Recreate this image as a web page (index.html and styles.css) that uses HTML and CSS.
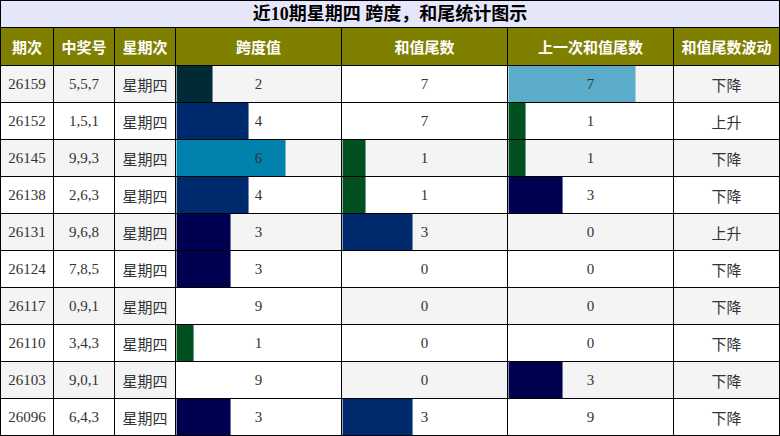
FILE: index.html
```html
<!DOCTYPE html>
<html lang="zh">
<head>
<meta charset="utf-8">
<title>近10期星期四 跨度，和尾统计图示</title>
<link rel="stylesheet" href="styles.css">
</head>
<body>
<div class="grid">
  <div class="title">近10期星期四 跨度，和尾统计图示</div>

  <div class="hd">期次</div><div class="hd">中奖号</div><div class="hd">星期次</div><div class="hd">跨度值</div><div class="hd">和值尾数</div><div class="hd">上一次和值尾数</div><div class="hd">和值尾数波动</div>

  <div class="c odd">26159</div><div class="c odd">5,5,7</div><div class="c odd cjk">星期四</div>
  <div class="c odd bc"><span class="bar b2" style="width:22.22%"></span><span class="v">2</span></div>
  <div class="c odd bc"><span class="bar bw" style="width:100%"></span><span class="v">7</span></div>
  <div class="c odd bc"><span class="bar b7" style="width:77.78%"></span><span class="v">7</span></div>
  <div class="c odd cjk">下降</div>

  <div class="c">26152</div><div class="c">1,5,1</div><div class="c cjk">星期四</div>
  <div class="c bc"><span class="bar b4" style="width:44.44%"></span><span class="v">4</span></div>
  <div class="c bc"><span class="bar bw" style="width:100%"></span><span class="v">7</span></div>
  <div class="c bc"><span class="bar b1" style="width:11.11%"></span><span class="v">1</span></div>
  <div class="c cjk">上升</div>

  <div class="c odd">26145</div><div class="c odd">9,9,3</div><div class="c odd cjk">星期四</div>
  <div class="c odd bc"><span class="bar b6" style="width:66.67%"></span><span class="v">6</span></div>
  <div class="c odd bc"><span class="bar b1" style="width:14.29%"></span><span class="v">1</span></div>
  <div class="c odd bc"><span class="bar b1" style="width:11.11%"></span><span class="v">1</span></div>
  <div class="c odd cjk">下降</div>

  <div class="c">26138</div><div class="c">2,6,3</div><div class="c cjk">星期四</div>
  <div class="c bc"><span class="bar b4" style="width:44.44%"></span><span class="v">4</span></div>
  <div class="c bc"><span class="bar b1" style="width:14.29%"></span><span class="v">1</span></div>
  <div class="c bc"><span class="bar b3" style="width:33.33%"></span><span class="v">3</span></div>
  <div class="c cjk">下降</div>

  <div class="c odd">26131</div><div class="c odd">9,6,8</div><div class="c odd cjk">星期四</div>
  <div class="c odd bc"><span class="bar b3" style="width:33.33%"></span><span class="v">3</span></div>
  <div class="c odd bc"><span class="bar b4" style="width:42.86%"></span><span class="v">3</span></div>
  <div class="c odd bc"><span class="v">0</span></div>
  <div class="c odd cjk">上升</div>

  <div class="c">26124</div><div class="c">7,8,5</div><div class="c cjk">星期四</div>
  <div class="c bc"><span class="bar b3" style="width:33.33%"></span><span class="v">3</span></div>
  <div class="c bc"><span class="v">0</span></div>
  <div class="c bc"><span class="v">0</span></div>
  <div class="c cjk">下降</div>

  <div class="c odd">26117</div><div class="c odd">0,9,1</div><div class="c odd cjk">星期四</div>
  <div class="c odd bc"><span class="bar bw" style="width:100%"></span><span class="v">9</span></div>
  <div class="c odd bc"><span class="v">0</span></div>
  <div class="c odd bc"><span class="v">0</span></div>
  <div class="c odd cjk">下降</div>

  <div class="c">26110</div><div class="c">3,4,3</div><div class="c cjk">星期四</div>
  <div class="c bc"><span class="bar b1" style="width:11.11%"></span><span class="v">1</span></div>
  <div class="c bc"><span class="v">0</span></div>
  <div class="c bc"><span class="v">0</span></div>
  <div class="c cjk">下降</div>

  <div class="c odd">26103</div><div class="c odd">9,0,1</div><div class="c odd cjk">星期四</div>
  <div class="c odd bc"><span class="bar bw" style="width:100%"></span><span class="v">9</span></div>
  <div class="c odd bc"><span class="v">0</span></div>
  <div class="c odd bc"><span class="bar b3" style="width:33.33%"></span><span class="v">3</span></div>
  <div class="c odd cjk">下降</div>

  <div class="c">26096</div><div class="c">6,4,3</div><div class="c cjk">星期四</div>
  <div class="c bc"><span class="bar b3" style="width:33.33%"></span><span class="v">3</span></div>
  <div class="c bc"><span class="bar b4" style="width:42.86%"></span><span class="v">3</span></div>
  <div class="c bc"><span class="bar bw" style="width:100%"></span><span class="v">9</span></div>
  <div class="c cjk">下降</div>
</div>
</body>
</html>
```
FILE: styles.css
```css
html, body {
  margin: 0;
  padding: 0;
  background: #fff;
}
body {
  width: 780px;
  height: 436px;
  overflow: hidden;
  font-family: "Liberation Serif", "Noto Sans CJK SC", serif;
}
.grid {
  display: grid;
  grid-template-columns: 52px 60px 60px 165px 165px 165px 105px;
  grid-template-rows: 26px 37px repeat(10, 36px);
  gap: 1px;
  padding: 1px;
  background: #000;
  width: 780px;
  box-sizing: border-box;
}
.title {
  grid-column: 1 / -1;
  background: #e6e6fa;
  color: #000;
  font-weight: bold;
  font-size: 18px;
  display: flex;
  align-items: center;
  justify-content: center;
  line-height: 1;
}
.hd {
  background: #808000;
  color: #fff;
  font-weight: bold;
  font-size: 15px;
  display: flex;
  align-items: center;
  justify-content: center;
}
.c {
  background: #fff;
  color: #333;
  font-size: 15px;
  display: flex;
  align-items: center;
  justify-content: center;
  position: relative;
}
.c.odd {
  background: #f4f4f4;
}
.cjk {
  font-size: 15px;
}
.bar {
  position: absolute;
  left: 0;
  top: 0;
  bottom: 0;
  box-sizing: border-box;
  border-left: 1px solid rgba(255,255,255,0.55);
  border-right: 1px solid rgba(255,255,255,0.45);
}
.v {
  position: relative;
}
.b1 { background: #005020; }
.b2 { background: #002b36; }
.b3 { background: #000050; }
.b4 { background: #002a6e; }
.b6 { background: #0082ac; }
.b7 { background: #5aacc8; }
.bw { background: #fff; border: none; }
```
